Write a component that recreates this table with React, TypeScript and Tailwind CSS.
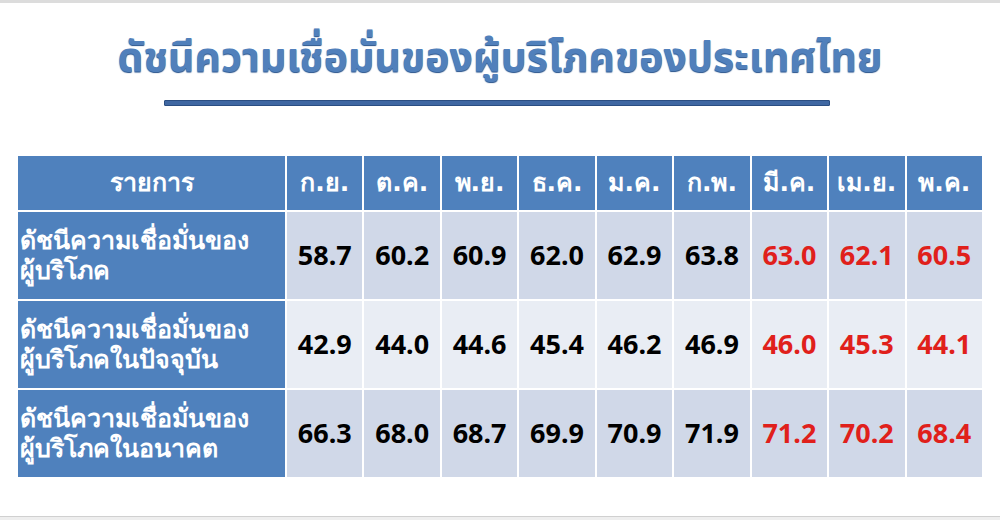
import React from 'react';

const months = ['ก.ย.', 'ต.ค.', 'พ.ย.', 'ธ.ค.', 'ม.ค.', 'ก.พ.', 'มี.ค.', 'เม.ย.', 'พ.ค.'];

const rows = [
  { label: ['ดัชนีความเชื่อมั่นของ', 'ผู้บริโภค'], values: ['58.7', '60.2', '60.9', '62.0', '62.9', '63.8', '63.0', '62.1', '60.5'], bg: 'bg-[#d0d8e8]' },
  { label: ['ดัชนีความเชื่อมั่นของ', 'ผู้บริโภคในปัจจุบัน'], values: ['42.9', '44.0', '44.6', '45.4', '46.2', '46.9', '46.0', '45.3', '44.1'], bg: 'bg-[#e9edf4]' },
  { label: ['ดัชนีความเชื่อมั่นของ', 'ผู้บริโภคในอนาคต'], values: ['66.3', '68.0', '68.7', '69.9', '70.9', '71.9', '71.2', '70.2', '68.4'], bg: 'bg-[#d0d8e8]' },
];

export default function App() {
  return (
    <div className="w-[1000px] h-[520px] bg-white flex flex-col font-['Tahoma','DejaVu_Sans',sans-serif]">
      <div className="h-[3px] bg-[#dcdcdc]" />

      {/* Title */}
      <div className="pt-[27px] text-center">
        <h1 className="text-[41px] leading-[56px] font-bold text-[#5180bb] [text-shadow:0_1px_1px_#24508a] font-['Noto_Sans_Thai','Noto_Sans',sans-serif]">
          ดัชนีความเชื่อมั่นของผู้บริโภคของประเทศไทย
        </h1>
      </div>
      <div className="mt-[14px] ml-[164px] w-[666px] h-[6px] rounded-[1px] bg-[#3f67a2] border border-[#2b4e82]" />

      {/* Table */}
      <div className="mt-[50px] ml-[18px] w-[964px] grid grid-cols-[267px_repeat(9,1fr)] gap-[2px] bg-white">
        <div className="h-[54px] bg-[#4f81bd] flex items-center justify-center text-white font-bold text-[25px]">
          รายการ
        </div>
        {months.map((m) => (
          <div key={m} className="h-[54px] bg-[#4f81bd] flex items-center justify-center text-white font-bold text-[25px]">
            {m}
          </div>
        ))}

        {rows.map((r, i) => (
          <React.Fragment key={i}>
            <div className="h-[87px] bg-[#4f81bd] flex flex-col justify-center pl-[2px] text-white font-bold text-[25px] leading-[30px]">
              <span>{r.label[0]}</span>
              <span>{r.label[1]}</span>
            </div>
            {r.values.map((v, j) => (
              <div
                key={j}
                className={`h-[87px] ${r.bg} flex items-center justify-center font-bold text-[27px] font-['Noto_Sans',sans-serif] ${j >= 6 ? 'text-[#e0201b]' : 'text-black'}`}
              >
                {v}
              </div>
            ))}
          </React.Fragment>
        ))}
      </div>

      <div className="flex-1" />
      <div className="h-[4px] bg-[#eeeeee] border-t border-[#d0d0d0]" />
    </div>
  );
}
